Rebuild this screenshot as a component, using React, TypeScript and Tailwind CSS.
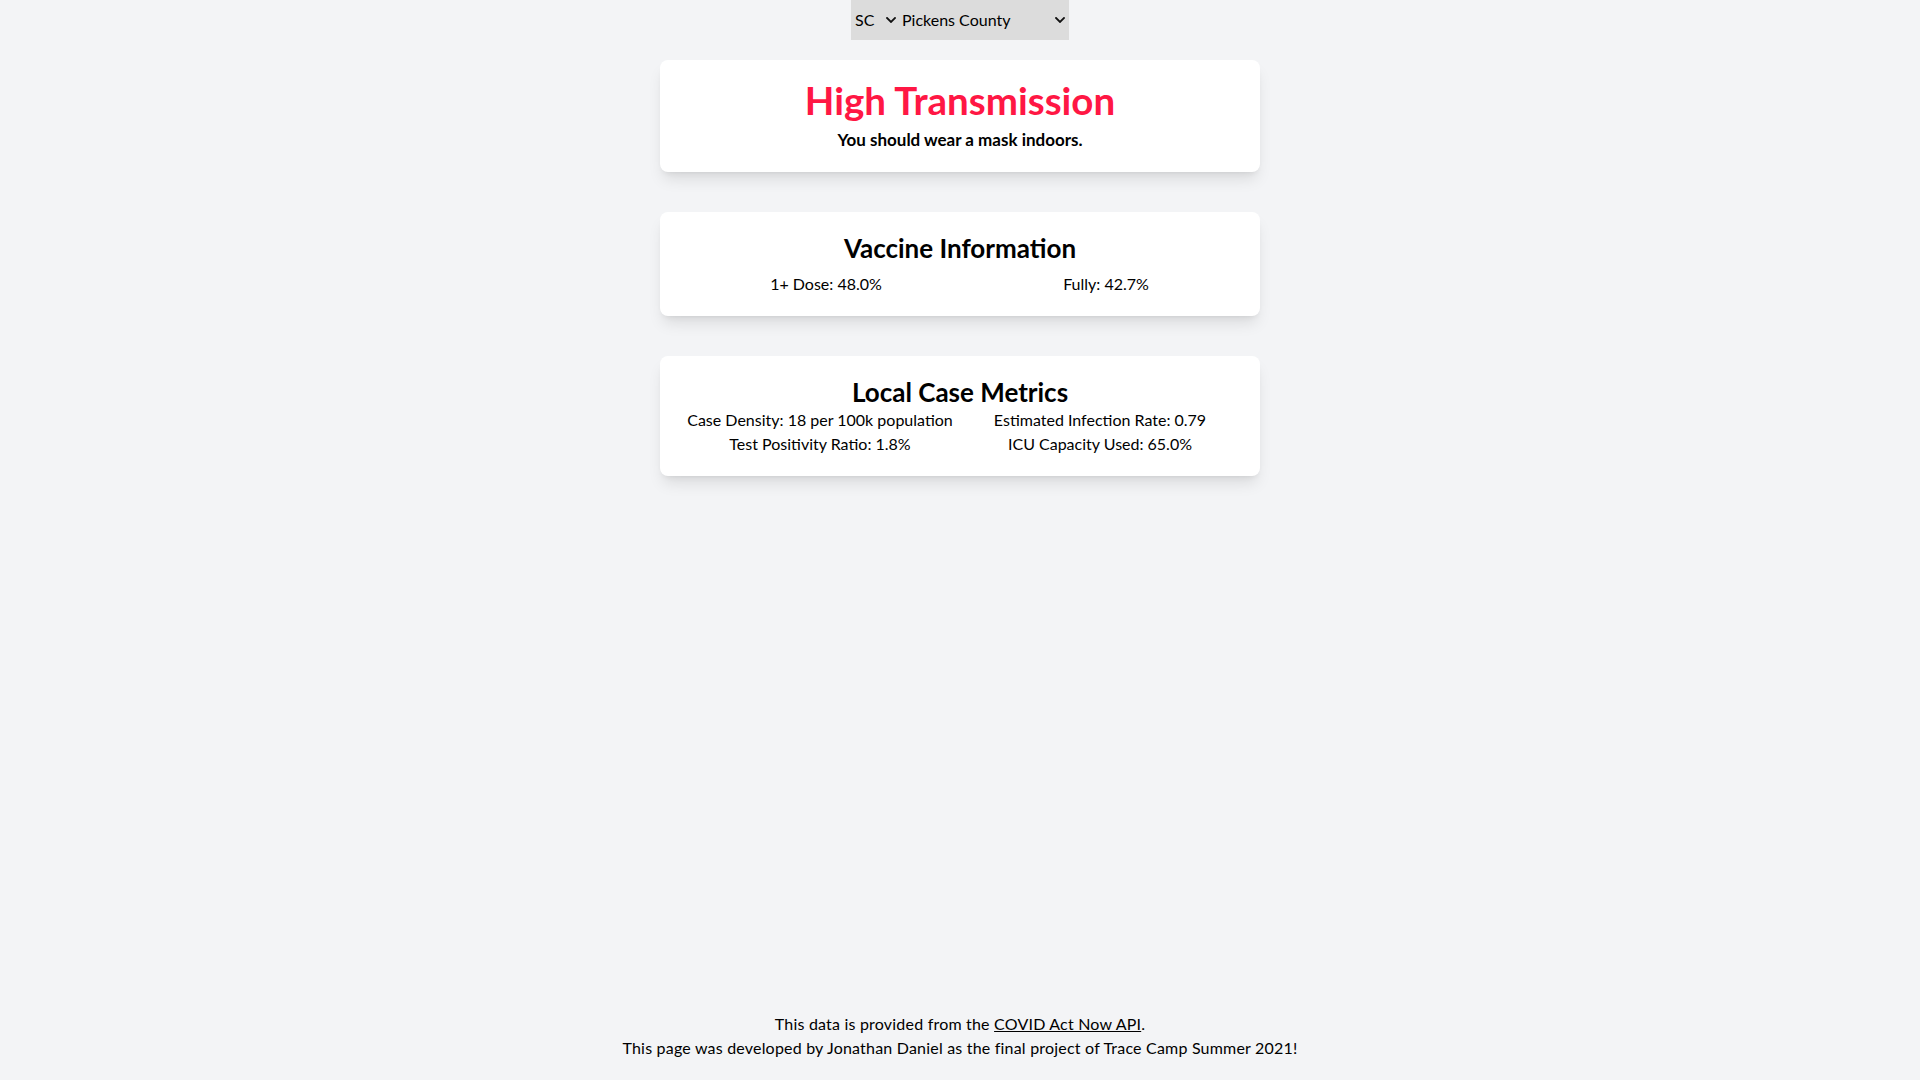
import React from "react";

function Chevron({ className = "" }: { className?: string }) {
  return (
    <svg viewBox="0 0 10 6" className={className} width="10" height="6" aria-hidden="true">
      <path d="M1 1l4 4 4-4" fill="none" stroke="#111" strokeWidth="1.8" strokeLinecap="square" />
    </svg>
  );
}

export default function App() {
  const font = { fontFamily: "Lato, 'Noto Sans', sans-serif" };
  return (
    <div className="min-h-screen flex flex-col items-center bg-[#f3f4f6] text-black" style={font}>
      <div className="flex h-[40px] w-[218px] items-center bg-[#dcdcdc] text-[16px]">
        <div className="flex items-center pl-[4px] w-[49px]">
          <span>SC</span>
          <Chevron className="ml-[12px]" />
        </div>
        <div className="flex flex-1 items-center pl-[2px] pr-[4px]">
          <span>Pickens County</span>
          <Chevron className="ml-auto" />
        </div>
      </div>

      <div className="mt-5 w-[600px] rounded-lg bg-white px-5 pt-5 pb-5 text-center shadow-lg">
        <h1 className="text-[38.5px] leading-[40px] font-bold text-[#ff1744]">High Transmission</h1>
        <p className="mt-2 text-[17px] leading-6 font-bold">You should wear a mask indoors.</p>
      </div>

      <div className="mt-10 w-[600px] rounded-lg bg-white px-5 pt-5 pb-5 text-center shadow-lg">
        <h2 className="text-[26px] leading-8 font-bold">Vaccine Information</h2>
        <div className="mt-2 ml-1.5 -mr-1.5 grid grid-cols-2 text-[16px] leading-6">
          <div>1+ Dose: 48.0%</div>
          <div>Fully: 42.7%</div>
        </div>
      </div>

      <div className="mt-10 w-[600px] rounded-lg bg-white px-5 pt-5 pb-5 text-center shadow-lg">
        <h2 className="text-[26px] leading-8 font-bold">Local Case Metrics</h2>
        <div className="grid grid-cols-2 text-[16px] leading-6">
          <div>Case Density: 18 per 100k population</div>
          <div>Estimated Infection Rate: 0.79</div>
          <div>Test Positivity Ratio: 1.8%</div>
          <div>ICU Capacity Used: 65.0%</div>
        </div>
      </div>

      <footer className="mt-auto pb-5 text-center text-[16px] leading-6 tracking-[0.2px]">
        <p>
          This data is provided from the <a href="#" className="underline">COVID Act Now API</a>.
        </p>
        <p>This page was developed by Jonathan Daniel as the final project of Trace Camp Summer 2021!</p>
      </footer>
    </div>
  );
}
